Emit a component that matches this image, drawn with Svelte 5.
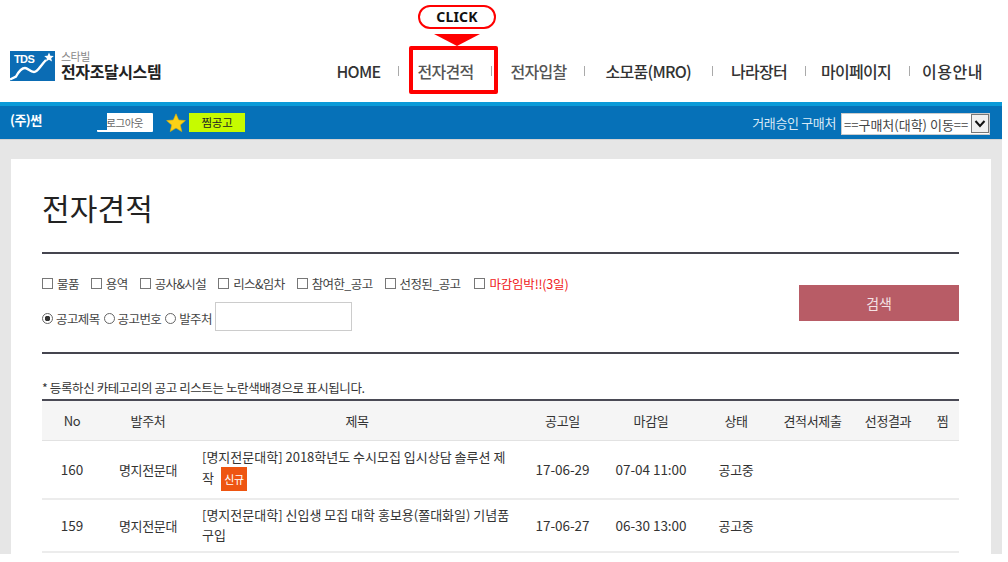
<script>
  const nav = ['HOME', '전자견적', '전자입찰', '소모품(MRO)', '나라장터', '마이페이지', '이용안내'];
  const cats = ['물품', '용역', '공사&시설', '리스&임차', '참여한_공고', '선정된_공고'];
  const heads = ['No', '발주처', '제목', '공고일', '마감일', '상태', '견적서제출', '선정결과', '찜'];
  const rows = [
    { no: 160, org: '명지전문대', title: '[명지전문대학] 2018학년도 수시모집 입시상담 솔루션 제작', isNew: true, start: '17-06-29', end: '07-04 11:00', state: '공고중' },
    { no: 159, org: '명지전문대', title: '[명지전문대학] 신입생 모집 대학 홍보용(쫄대화일) 기념품 구입', isNew: false, start: '17-06-27', end: '06-30 13:00', state: '공고중' }
  ];
</script>

<div class="page">
  <header class="top">
    <div class="logo">
      <svg class="mark" width="45" height="30" viewBox="0 0 45 30">
        <rect width="45" height="30" fill="#0b6cb4" />
        <path d="M0 28.5 L6 25.5 C9 20 12 17 15 17 C18 17 20 21 24 21 C28 21 30 15 36 9" fill="none" stroke="#fff" stroke-width="2.4" />
        <path d="M39 1.5 L40.4 4.7 L43.8 5 L41.2 7.2 L42 10.6 L39 8.8 L36 10.6 L36.8 7.2 L34.2 5 L37.6 4.7 Z" fill="#fff" />
      </svg>
      <span class="tds">TDS</span>
      <div class="logotext">
        <span class="sub">스타빌</span>
        <strong>전자조달시스템</strong>
      </div>
    </div>
    <nav>
      {#each nav as item, i}
        {#if i > 0}<i class="sep"></i>{/if}
        <a href="#top" class:dim={i === 1 || i === 2}>{item}</a>
      {/each}
    </nav>
  </header>

  <div class="bar">
    <div class="left">
      <b>(주)썬</b>
      <span class="logout"><span class="patch"></span>로그아웃</span>
      <svg class="star" width="20" height="20" viewBox="0 0 20 20"><path d="M10 .8 L12.7 7 L19.4 7.6 L14.3 12 L15.8 18.6 L10 15.1 L4.2 18.6 L5.7 12 L.6 7.6 L7.3 7 Z" fill="#fcd116" stroke="#e2b100" stroke-width=".6" /></svg>
      <span class="fav">찜공고</span>
    </div>
    <div class="right">
      <span>거래승인 구매처</span>
      <div class="selectwrap">
        <select><option>==구매처(대학) 이동==</option></select>
        <svg width="18" height="19" viewBox="0 0 18 19"><rect x=".5" y=".5" width="17" height="18" fill="#f0f0f0" stroke="#777" /><path d="M4.5 7 L9 12 L13.5 7" fill="none" stroke="#111" stroke-width="2" /></svg>
      </div>
    </div>
  </div>

  <main>
    <section class="card">
      <h1>전자견적</h1>
      <div class="filters">
        <div class="fields">
          <div class="checks">
            {#each cats as c}
              <label><input type="checkbox" />{c}</label>
            {/each}
            <label class="urgent"><input type="checkbox" />마감임박!!(3일)</label>
          </div>
          <div class="radios">
            <label><input type="radio" name="k" checked />공고제목</label>
            <label><input type="radio" name="k" />공고번호</label>
            <label><input type="radio" name="k" />발주처</label>
            <input class="query" type="text" />
          </div>
        </div>
        <button>검색</button>
      </div>
      <p class="note">* 등록하신 카테고리의 공고 리스트는 노란색배경으로 표시됩니다.</p>
      <table>
        <colgroup>
          <col style="width:60px" /><col style="width:92px" /><col style="width:326px" /><col style="width:85px" /><col style="width:92px" /><col style="width:78px" /><col style="width:75px" /><col style="width:76px" /><col style="width:33px" />
        </colgroup>
        <thead>
          <tr>{#each heads as h}<th>{h}</th>{/each}</tr>
        </thead>
        <tbody>
          {#each rows as r}
            <tr>
              <td>{r.no}</td>
              <td>{r.org}</td>
              <td class="title">{r.title}{#if r.isNew}<span class="new">신규</span>{/if}</td>
              <td>{r.start}</td>
              <td>{r.end}</td>
              <td>{r.state}</td>
              <td></td><td></td><td></td>
            </tr>
          {/each}
        </tbody>
      </table>
    </section>
  </main>

  <div class="callout">
    <span class="pill">CLICK</span>
    <i class="tri"></i>
    <i class="box"></i>
  </div>
</div>

<style>
  :global(body) { margin: 0; background: #fff; }
  .page {
    position: relative; width: 1002px; height: 554px; overflow: hidden;
    font-family: "Noto Sans CJK KR", "Noto Sans", sans-serif; color: #333;
  }
  .top { height: 102px; display: flex; background: #fff; }
  .logo { position: relative; display: flex; margin: 51px 0 0 10px; height: 30px; }
  .tds { position: absolute; left: 4px; top: 2px; color: #fff; font: bold 11px "Liberation Sans", sans-serif; line-height: 13px; letter-spacing: -.6px; }
  .logotext { display: flex; flex-direction: column; margin-left: 6px; }
  .sub { font-size: 11px; line-height: 11px; color: #888; letter-spacing: -.5px; }
  .logotext strong { font-size: 16px; line-height: 20px; margin-top: -1px; color: #222; letter-spacing: -.4px; font-weight: 700; }
  nav { margin-left: auto; margin-right: 19px; display: flex; align-items: center; gap: 18px; height: 24px; margin-top: 59px; }
  nav a { font-size: 16px; font-weight: 500; letter-spacing: -.72px; color: #333; text-decoration: none; line-height: 24px; white-space: nowrap; }
  nav a.dim { color: #555; }
  nav a:nth-child(7) { margin: 0 3px 0 2px; }
  nav a:nth-child(11) { margin-left: -3px; }
  nav a:nth-child(13) { margin-left: -6px; letter-spacing: .5px; }
  .sep { width: 1px; height: 10px; background: #aaa; }

  .bar {
    height: 33px; background: #0671b8; border-top: 4px solid #0a9ad8; border-bottom: 1px solid #d3d3d3;
    display: flex; justify-content: space-between; align-items: center; padding: 0 12px 0 10px;
  }
  .left, .right { display: flex; align-items: center; }
  .left b { color: #fff; font-size: 13px; letter-spacing: -.5px; width: 87px; font-weight: 700; margin-top: -6px; }
  .logout { position: relative; width: 56px; height: 19px; background: #fff; color: #666; font-size: 10.5px; line-height: 19px; text-align: right; padding-right: 10px; box-sizing: border-box; letter-spacing: -.5px; border-radius: 1px; }
  .patch { position: absolute; left: -20px; top: -1px; width: 30px; height: 18px; background: #0671b8; }
  .star { margin-left: 13px; }
  .fav { margin-left: 3px; width: 56px; height: 19px; background: #c6fb00; color: #222; font-size: 11.5px; line-height: 19px; text-align: center; letter-spacing: -.3px; }
  .right > span { color: #d9eaf6; font-size: 13px; letter-spacing: -.35px; margin-right: 5px; }
  .selectwrap { position: relative; height: 22px; margin-top: 3px; }
  select { appearance: none; display: block; width: 149px; height: 22px; border: 1px solid #ccc; background: #fff; color: #444; font: 13px "Noto Sans CJK KR", sans-serif; padding: 0 0 0 2px; border-radius: 0; letter-spacing: 0; }
  .selectwrap svg { position: absolute; right: 1px; top: 1px; }

  main { background: #e6e6e6; padding: 19px 11px 0; height: 415px; box-sizing: border-box; }
  .card { background: #fff; height: 396px; padding: 0 32px 0 31px; overflow: hidden; }
  h1 { margin: 0; height: 93px; border-bottom: 2px solid #45454f; font-size: 30px; font-weight: 400; color: #222; letter-spacing: .15px; line-height: 97px; }
  .filters { display: flex; justify-content: space-between; height: 98px; border-bottom: 2px solid #45454f; }
  .fields { padding-top: 18px; }
  label { display: flex; align-items: center; font-size: 12.5px; letter-spacing: -.6px; color: #444; white-space: nowrap; }
  .checks { display: flex; gap: 12px; height: 22px; }
  .checks input { appearance: none; width: 9px; height: 9px; border: 1px solid #777; background: #fff; margin: 0 4px 0 0; box-sizing: content-box; }
  .checks label.urgent { color: #f02020; margin-left: 2px; letter-spacing: -.2px; }
  .radios { display: flex; align-items: center; margin-top: 9px; height: 30px; }
  .radios label { margin-right: 4px; }
  .radios input[type=radio] { appearance: none; width: 11px; height: 11px; border: 1px solid #666; border-radius: 50%; margin: 0 3px 0 0; background: #fff; box-sizing: border-box; }
  .radios input[type=radio]:checked { background: radial-gradient(circle, #333 0 2.6px, #fff 3px); }
  .query { width: 137px; height: 29px; box-sizing: border-box; border: 1px solid #ccc; margin: -4px 0 0 -1px; padding: 0; background: #fff; }
  button { width: 160px; height: 36px; margin-top: 31px; border: 0; background: #b85c66; color: #f4e3e5; font: 14px "Noto Sans CJK KR", sans-serif; padding: 0; letter-spacing: -.2px; }
  .note { margin: 0; height: 45px; box-sizing: border-box; padding-top: 25px; font-size: 12.5px; line-height: 18px; letter-spacing: -.4px; color: #333; }
  table { width: 917px; border-collapse: collapse; table-layout: fixed; border-top: 2px solid #4a4a55; }
  th { height: 39px; background: #f5f5f5; border-bottom: 1px solid #e2e2e2; font-size: 13px; font-weight: 400; letter-spacing: -.35px; padding: 0; color: #333; }
  td { border-bottom: 2px solid #ececec; font-size: 13px; letter-spacing: -.35px; text-align: center; padding: 0; color: #333; line-height: 21px; }
  tbody tr:first-child { height: 58px; }
  tbody tr:last-child { height: 53px; }
  td:first-child { font-size: 13.5px; letter-spacing: 0; }
  td:nth-child(4), td:nth-child(5) { font-size: 13.5px; letter-spacing: -.05px; }
  td.title { text-align: left; padding-left: 8px; padding-right: 10px; font-size: 13px; letter-spacing: 0; line-height: 20px; }
  .new { display: inline-block; margin-left: 7px; width: 26px; height: 24px; background: #ee5511; color: #fff; font-size: 11px; line-height: 24px; text-align: center; letter-spacing: -.3px; vertical-align: middle; }

  .callout { position: absolute; left: 0; top: 0; }
  .pill { position: absolute; left: 418px; top: 5px; width: 78px; height: 24px; box-sizing: border-box; border: 2px solid #f00; border-radius: 12px; background: #fff; color: #111; font: bold 14px/20px "Noto Sans", sans-serif; text-align: center; letter-spacing: .2px; }
  .tri { position: absolute; left: 434px; top: 34px; width: 0; height: 0; border-left: 23px solid transparent; border-right: 23px solid transparent; border-top: 12px solid #f00; }
  .box { position: absolute; left: 409px; top: 46px; width: 89px; height: 48px; box-sizing: border-box; border: 4px solid #f00; border-radius: 2px; }
</style>
